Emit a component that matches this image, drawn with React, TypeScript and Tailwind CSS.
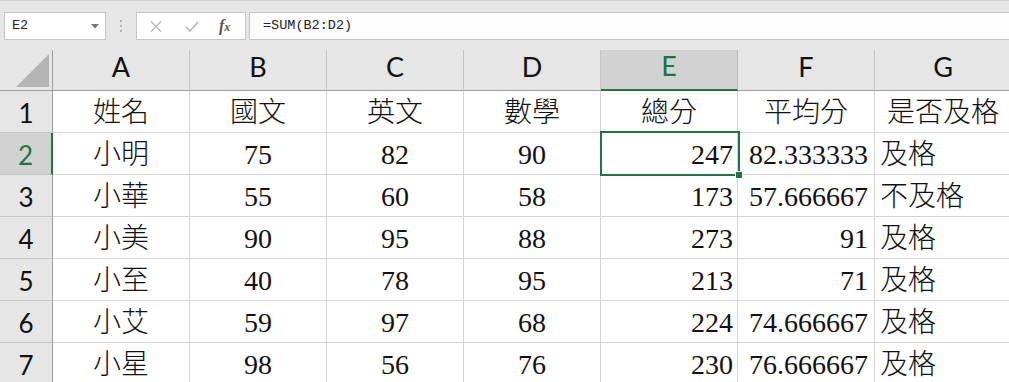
const cols = ['A', 'B', 'C', 'D', 'E', 'F', 'G'];

const rows: (string | number)[][] = [
  ['姓名', '國文', '英文', '數學', '總分', '平均分', '是否及格'],
  ['小明', 75, 82, 90, 247, '82.333333', '及格'],
  ['小華', 55, 60, 58, 173, '57.666667', '不及格'],
  ['小美', 90, 95, 88, 273, '91', '及格'],
  ['小至', 40, 78, 95, 213, '71', '及格'],
  ['小艾', 59, 97, 68, 224, '74.666667', '及格'],
  ['小星', 98, 56, 76, 230, '76.666667', '及格'],
];

const cellFont = { fontFamily: '"Liberation Serif", "Noto Sans CJK TC", serif' };
const headFont = { fontFamily: 'Lato, "Liberation Sans", sans-serif' };
const monoFont = { fontFamily: '"Liberation Mono", monospace' };

function alignFor(r: number, c: number) {
  if (r === 0 || c <= 3) return 'justify-center';
  if (c === 6) return 'justify-start pl-[5px]';
  if (c === 4) return 'justify-end pr-[4px]';
  return 'justify-end pr-[6px]';
}

function FormulaBar() {
  return (
    <div className="flex h-[50px] items-start border-t border-[#d4d4d4] bg-[#e6e6e6] pl-[4px] pt-[11px]">
      {/* name box */}
      <div className="flex h-[28px] w-[102px] items-center justify-between border border-[#c6c6c6] bg-white pl-[7px] pr-[6px] text-[13.5px] text-[#222]" style={monoFont}>
        <span>E2</span>
        <svg width="8" height="5" viewBox="0 0 8 5">
          <path d="M0 0h8L4 4.5z" fill="#777" />
        </svg>
      </div>
      <div className="flex h-[28px] w-[30px] flex-col items-center justify-center gap-[3px]">
        <span className="h-[2px] w-[2px] bg-[#b0b0b0]" />
        <span className="h-[2px] w-[2px] bg-[#b0b0b0]" />
        <span className="h-[2px] w-[2px] bg-[#b0b0b0]" />
      </div>
      {/* buttons */}
      <div className="flex h-[28px] w-[110px] items-center border border-[#c6c6c6] bg-white">
        <svg className="ml-[13px]" width="12" height="11" viewBox="0 0 12 11">
          <path d="M1 0.5l10 10M11 0.5l-10 10" stroke="#b4b4b4" strokeWidth="1.2" />
        </svg>
        <svg className="ml-[23px]" width="14" height="11" viewBox="0 0 14 11">
          <path d="M1 6l4 4L13 1" stroke="#b4b4b4" strokeWidth="1.6" fill="none" />
        </svg>
        <span className="ml-[20px] text-[16px] font-bold italic leading-none text-[#555]" style={{ fontFamily: '"Liberation Serif", serif' }}>
          f<span className="text-[12px]">x</span>
        </span>
      </div>
      {/* formula */}
      <div className="ml-[3px] flex h-[28px] flex-1 items-center border border-r-0 border-[#c6c6c6] bg-[#fdfdfd] pl-[13px] text-[13.5px] text-[#222]" style={monoFont}>
        =SUM(B2:D2)
      </div>
    </div>
  );
}

export default function App() {
  return (
    <div className="h-[382px] w-[1009px] overflow-hidden bg-white">
      <FormulaBar />
      <div className="grid grid-cols-[53px_repeat(7,137px)]">
        {/* header row */}
        <div className="flex h-[41px] items-end justify-end border-r border-b border-[#9e9e9e] bg-[#e6e6e6] pr-[3px] pb-[3px]">
          <svg width="33" height="33" viewBox="0 0 33 33">
            <path d="M33 0V33H0z" fill="#b4b4b4" />
          </svg>
        </div>
        {cols.map((c) => (
          <div
            key={c}
            className={
              c === 'E'
                ? 'flex h-[41px] items-center justify-center border-r border-b-2 border-r-[#b9b9b9] border-b-[#217346] bg-[#d2d2d2] pb-[6px] text-[27px] text-[#217346]'
                : 'flex h-[41px] items-center justify-center border-r border-b border-r-[#c4c4c4] border-b-[#9e9e9e] bg-[#e6e6e6] pb-[6px] text-[27px] text-[#111]'
            }
            style={headFont}
          >
            {c}
          </div>
        ))}

        {rows.map((row, r) => (
          <div key={r} className="contents">
            <div
              className={
                r === 1
                  ? 'flex h-[42px] items-center justify-center border-r-2 border-b border-r-[#217346] border-b-[#c6c6c6] bg-[#d2d2d2] pt-[4px] text-[26px] text-[#217346]'
                  : 'flex h-[42px] items-center justify-center border-r border-b border-r-[#9e9e9e] border-b-[#c6c6c6] bg-[#e6e6e6] pt-[4px] text-[26px] text-[#111]'
              }
              style={headFont}
            >
              {r + 1}
            </div>
            {row.map((v, c) => (
              <div
                key={c}
                className={`relative flex h-[42px] items-center whitespace-nowrap border-r border-b border-[#d4d4d4] pt-[3px] text-[28px] font-light leading-none text-[#111] ${alignFor(r, c)}`}
                style={cellFont}
              >
                {v}
                {r === 1 && c === 4 && (
                  <div className="absolute top-[-2px] left-[-1px] z-10 h-[45px] w-[140px] border-2 border-[#217346]">
                    <div className="absolute right-[-5px] bottom-[-5px] h-[8px] w-[8px] border border-white bg-[#217346]" />
                  </div>
                )}
              </div>
            ))}
          </div>
        ))}
      </div>
    </div>
  );
}
